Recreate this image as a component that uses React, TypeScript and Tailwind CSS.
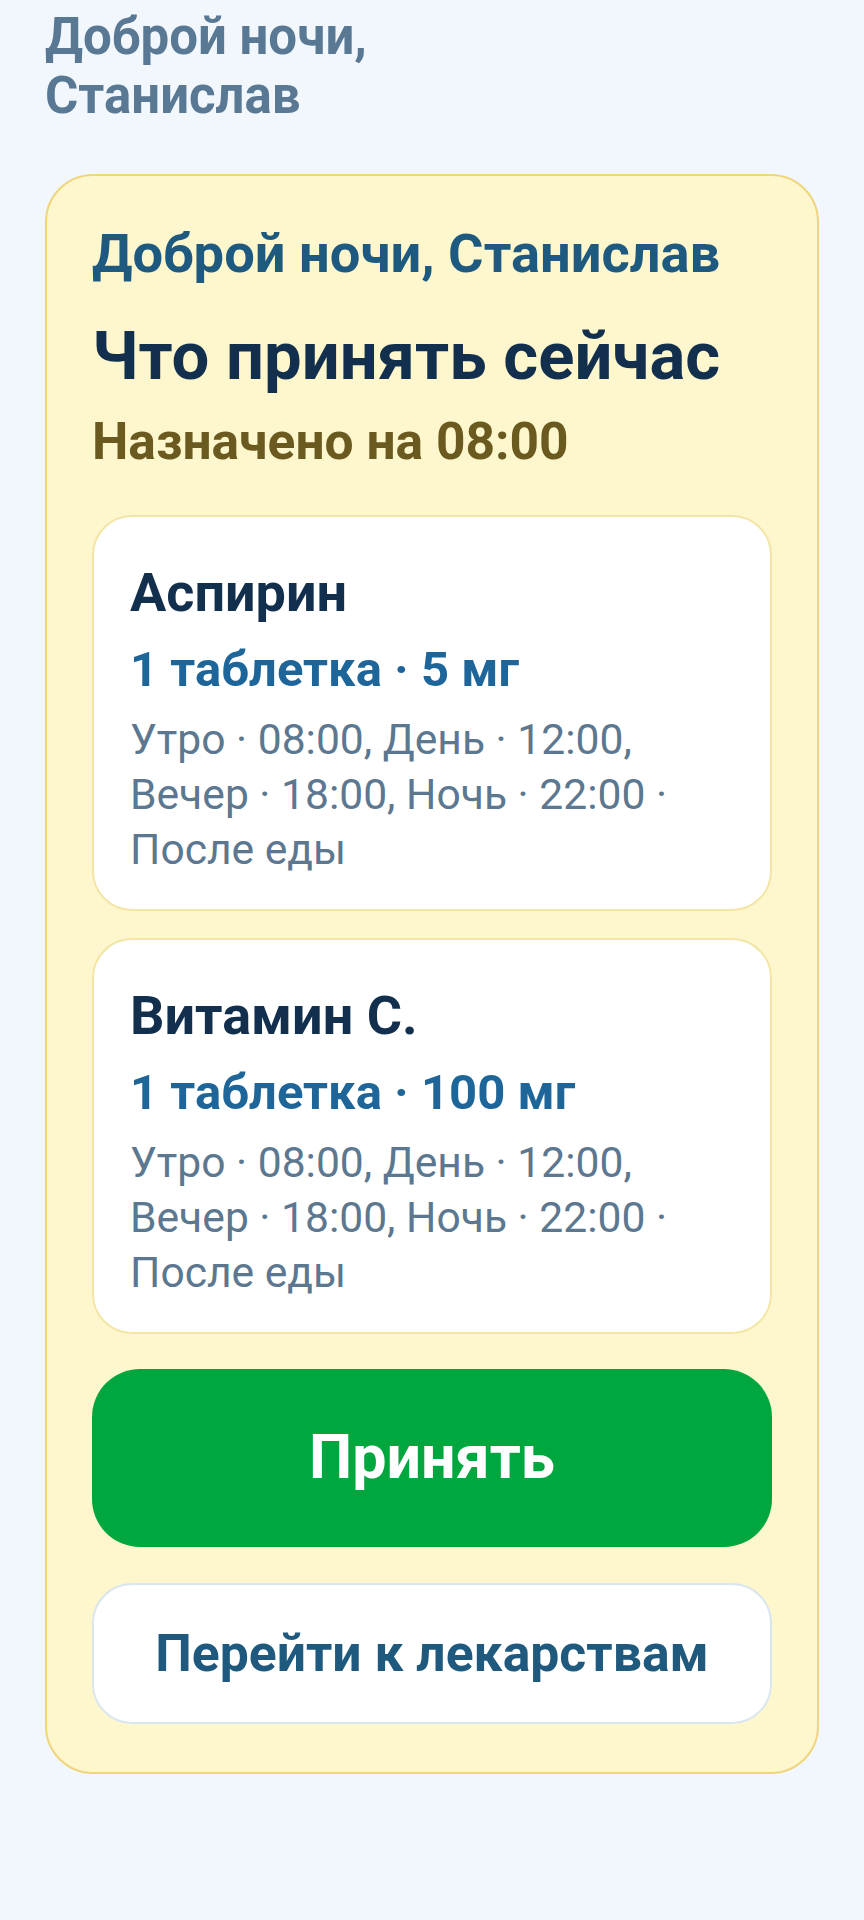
import React from 'react';

interface Medicine {
    name: string;
    dose: string;
    schedule: string;
}

const medicines: Medicine[] = [
    {
        name: 'Аспирин',
        dose: '1 таблетка · 5 мг',
        schedule: 'Утро · 08:00, День · 12:00, Вечер · 18:00, Ночь · 22:00 · После еды',
    },
    {
        name: 'Витамин С.',
        dose: '1 таблетка · 100 мг',
        schedule: 'Утро · 08:00, День · 12:00, Вечер · 18:00, Ночь · 22:00 · После еды',
    },
];

const MedicineCard: React.FC<{ med: Medicine }> = ({ med }) => {
    return (
        <div className="bg-white border-2 border-[#f3e5a6] rounded-[40px] pt-[44px] pb-[32px] px-[36px]">
            <p className="text-[54px] leading-[64px] font-bold text-[#12304e]">{med.name}</p>
            <p className="mt-[15px] text-[49px] leading-[60px] font-bold text-[#1e6599]">{med.dose}</p>
            <p className="mt-[12px] text-[42.6px] leading-[55px] text-[#5c7790]">{med.schedule}</p>
        </div>
    );
};

export default function App() {
    return (
        <div className="min-h-screen bg-[#f1f7fd] font-['Roboto',sans-serif] pt-[7px] pb-[60px]">
            {/* Greeting */}
            <h1 className="px-[45px] text-[51px] leading-[59px] font-bold text-[#587893]">
                Доброй ночи,
                <br />
                Станислав
            </h1>

            {/* Now card */}
            <div className="mt-[49px] mx-[45px] bg-[#fef6cc] border-2 border-[#efd57c] rounded-[48px] px-[45px] pt-[46px] pb-[48px]">
                <p className="text-[54.3px] leading-[64px] font-bold text-[#1e5a80]">Доброй ночи, Станислав</p>
                <h2 className="mt-[31px] text-[67px] leading-[78px] font-bold text-[#12304e]">Что принять сейчас</h2>
                <p className="mt-[17px] text-[51.5px] leading-[60px] font-bold text-[#6b5a1f]">Назначено на 08:00</p>

                <div className="mt-[43px] flex flex-col gap-[27px]">
                    {medicines.map((m) => (
                        <MedicineCard key={m.name} med={m} />
                    ))}
                </div>

                <button className="mt-[35px] w-full h-[178px] rounded-[48px] bg-[#00a63e] text-white text-[61px] font-bold">
                    Принять
                </button>
                <button className="mt-[36px] w-full h-[141px] rounded-[40px] bg-white border-2 border-[#dae6ef] text-[#1f5a7e] text-[51.7px] font-bold">
                    Перейти к лекарствам
                </button>
            </div>
        </div>
    );
}
